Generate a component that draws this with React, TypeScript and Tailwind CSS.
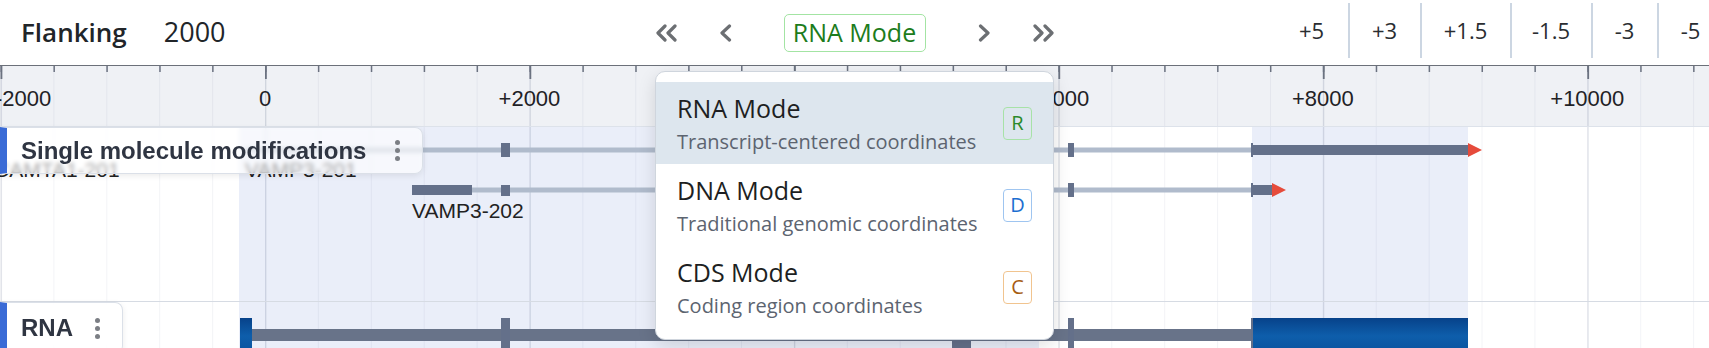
import React from 'react';

// genome coordinate -> page x
const PX0 = 265;
const PER = 0.13223;
const xAt = (bp: number) => PX0 + bp * PER;

const majors = [-2000, 0, 2000, 4000, 6000, 8000, 10000];
const minors = Array.from({ length: 33 }, (_, i) => -2000 + i * 400);

const EXON = '#64708a';
const INTRON = '#b0bbcc';
const ARROW = '#e64b3b';

function Chevron({ dir, double }: { dir: 'left' | 'right'; double?: boolean }) {
  const lines = double
    ? dir === 'left'
      ? ['10,2 3,9 10,16', '20,2 13,9 20,16']
      : ['3,2 10,9 3,16', '13,2 20,9 13,16']
    : dir === 'left'
      ? ['10.5,2 3,9 10.5,16']
      : ['2.5,2 10,9 2.5,16'];
  const w = double ? 23 : 13;
  return (
    <svg width={w} height="18" viewBox={`0 0 ${w} 18`} fill="none" stroke="#6c6f73" strokeWidth="3.2" strokeLinecap="round" strokeLinejoin="round">
      {lines.map((p) => (
        <polyline key={p} points={p} />
      ))}
    </svg>
  );
}

function Kebab() {
  return (
    <div className="flex flex-col gap-[3px]">
      <span className="h-[5px] w-[5px] rounded-full bg-[#7b7e84]" />
      <span className="h-[5px] w-[5px] rounded-full bg-[#7b7e84]" />
      <span className="h-[5px] w-[5px] rounded-full bg-[#7b7e84]" />
    </div>
  );
}

function Grid({ height }: { height: number }) {
  return (
    <>
      {minors.map((bp) => (
        <rect key={bp} x={xAt(bp)} y={0} width={1} height={height} fill="rgba(90,105,135,0.07)" />
      ))}
      {majors.map((bp) => (
        <rect key={bp} x={xAt(bp)} y={0} width={1.5} height={height} fill="rgba(90,105,135,0.14)" />
      ))}
    </>
  );
}

const zoomSteps = [
  { label: '+5', w: 'w-[72px]' },
  { label: '+3', w: 'w-[72px]' },
  { label: '+1.5', w: 'w-[90px]' },
  { label: '-1.5', w: 'w-[81px]' },
  { label: '-3', w: 'w-[66px]' },
  { label: '-5', w: 'w-[66px]' },
];

const modes = [
  {
    title: 'RNA Mode',
    sub: 'Transcript-centered coordinates',
    key: 'R',
    badge: 'border-[#a7e2a7] text-[#2b8a2b]',
    active: true,
  },
  {
    title: 'DNA Mode',
    sub: 'Traditional genomic coordinates',
    key: 'D',
    badge: 'border-[#9fc5f0] text-[#1c6ed0]',
    active: false,
  },
  {
    title: 'CDS Mode',
    sub: 'Coding region coordinates',
    key: 'C',
    badge: 'border-[#f1c48f] text-[#a65d12]',
    active: false,
  },
];

export default function App() {
  return (
    <div className="relative h-[348px] w-[1709px] overflow-hidden bg-white font-['Open_Sans',sans-serif]">
      {/* Top bar */}
      <header className="grid h-[65px] grid-cols-[minmax(0,1fr)_auto_minmax(0,1fr)] items-center text-[#212529]">
        <div className="flex items-center pl-[21px]">
          <span className="text-[26px] font-semibold">Flanking</span>
          <span className="ml-[37px] text-[27px]">2000</span>
        </div>

        <div className="flex items-center">
          <Chevron dir="left" double />
          <span className="ml-[41px] flex">
            <Chevron dir="left" />
          </span>
          <button className="ml-[52px] flex h-[38px] w-[142px] items-center justify-center rounded-[5px] border border-[#a3e4a3] text-[25px] text-[#1c7c1c]">
            RNA Mode
          </button>
          <span className="ml-[52px] flex">
            <Chevron dir="right" />
          </span>
          <span className="ml-[41px] flex">
            <Chevron dir="right" double />
          </span>
        </div>

        <div className="ml-[221px] flex items-start self-stretch pt-[3px]">
          {zoomSteps.map((s, i) => (
            <button
              key={s.label}
              className={`flex h-[55px] shrink-0 items-center justify-center text-[22px] text-[#2a2d31] ${s.w} ${
                i > 0 ? 'border-l-2 border-[#ccd6e2]' : ''
              }`}
            >
              {s.label}
            </button>
          ))}
        </div>
      </header>

      {/* Ruler */}
      <div className="h-[62px] border-t border-b border-t-[#6b7079] border-b-[#dde2ea] bg-[#eff1f5]">
        <svg width="1709" height="60" className="block font-['Liberation_Sans',Arial,sans-serif]">
          <Grid height={60} />
          {minors.map((bp) => (
            <rect key={bp} x={xAt(bp)} y={0} width={1.5} height={6} fill="#6b7280" />
          ))}
          {majors.map((bp) => (
            <rect key={bp} x={xAt(bp)} y={0} width={1.8} height={13} fill="#6b7280" />
          ))}
          {majors.map((bp) => (
            <text
              key={bp}
              x={bp === -2000 ? -5 : xAt(bp)}
              y={40}
              fontSize="22"
              fill="#1f2226"
              textAnchor={bp === -2000 ? 'start' : 'middle'}
            >
              {bp > 0 ? `+${bp}` : `${bp}`}
            </text>
          ))}
        </svg>
      </div>

      {/* Transcript track */}
      <div className="relative h-[175px] border-b border-[#d6dbe3]">
        <svg width="1709" height="174" className="block font-['Liberation_Sans',Arial,sans-serif]">
          <rect x={239} y={0} width={800} height={174} fill="#eaeef9" />
          <rect x={1252} y={0} width={216} height={174} fill="#eaeef9" />
          <Grid height={174} />

          {/* VAMP3-201 */}
          <rect x={245} y={20.5} width={1006} height={5} fill={INTRON} />
          <rect x={501} y={16} width={9} height={14} fill={EXON} />
          <rect x={1068} y={16} width={6} height={14} fill={EXON} />
          <rect x={1251} y={18} width={217} height={10} fill={EXON} />
          <rect x={1251} y={16} width={2} height={14} fill={EXON} />
          <polygon points="1468,16 1482,23 1468,30" fill={ARROW} />
          <text x={-6} y={50} fontSize="21" fill="#222">CAMTA1-201</text>
          <text x={245} y={50} fontSize="21" fill="#222">VAMP3-201</text>

          {/* VAMP3-202 */}
          <rect x={472} y={60.5} width={779} height={5} fill={INTRON} />
          <rect x={412} y={58} width={60} height={10} fill={EXON} />
          <rect x={501} y={58} width={9} height={11} fill={EXON} />
          <rect x={1068} y={56} width={6} height={14} fill={EXON} />
          <rect x={1251} y={58} width={21} height={10} fill={EXON} />
          <rect x={1251} y={56} width={2} height={14} fill={EXON} />
          <polygon points="1272,56 1286,63 1272,70" fill={ARROW} />
          <text x={412} y={91} fontSize="21" fill="#222">VAMP3-202</text>
        </svg>

        <div className="absolute left-0 top-0 flex h-[47px] w-[423px] items-center justify-between rounded-r-[8px] border border-l-[7px] border-[#dbe0e8] border-l-[#3a6bd6] bg-white/60 pl-[14px] pr-[22px] shadow-[0_2px_6px_rgba(0,0,0,0.08)] backdrop-blur-[2px]">
          <span className="font-['Liberation_Sans',Arial,sans-serif] text-[24px] font-bold text-[#2f3542]">
            Single molecule modifications
          </span>
          <Kebab />
        </div>
      </div>

      {/* RNA track */}
      <div className="relative h-[46px]">
        <svg width="1709" height="46" className="block">
          <defs>
            <linearGradient id="rnaBlue" x1="0" y1="0" x2="0" y2="1">
              <stop offset="0" stopColor="#07428a" />
              <stop offset="0.6" stopColor="#0e5eab" />
              <stop offset="1" stopColor="#0b56a2" />
            </linearGradient>
          </defs>
          <rect x={239} y={0} width={800} height={46} fill="#eaeef9" />
          <rect x={1252} y={0} width={216} height={46} fill="#eaeef9" />
          <Grid height={46} />
          <rect x={252} y={27} width={999} height={12} fill="#687389" />
          <rect x={240} y={16} width={12} height={30} fill="url(#rnaBlue)" />
          <rect x={501} y={16} width={9} height={30} fill={EXON} />
          <rect x={952} y={16} width={19} height={30} fill={EXON} />
          <rect x={1068} y={16} width={6} height={30} fill={EXON} />
          <rect x={1251} y={16} width={217} height={30} fill="url(#rnaBlue)" />
          <rect x={1251} y={16} width={2} height={30} fill={EXON} />
        </svg>

        <div className="absolute left-0 top-0 flex h-[52px] w-[123px] items-center justify-between rounded-r-[8px] border border-l-[7px] border-[#dbe0e8] border-l-[#3a6bd6] bg-white/70 pl-[14px] pr-[22px] shadow-[0_2px_6px_rgba(0,0,0,0.08)] backdrop-blur-[2px]">
          <span className="font-['Liberation_Sans',Arial,sans-serif] text-[24px] font-bold text-[#2f3542]">RNA</span>
          <Kebab />
        </div>
      </div>

      {/* Mode dropdown */}
      <div className="absolute left-[655px] top-[71px] w-[399px] overflow-hidden rounded-[10px] border border-[#cfd5dd] bg-white pb-[11px] pt-[10px] shadow-[0_6px_18px_rgba(0,0,0,0.13)]">
        {modes.map((m) => (
          <div
            key={m.key}
            className={`flex h-[82px] items-center justify-between px-[21px] ${m.active ? 'bg-[#dde6ee]' : ''}`}
          >
            <div className="flex flex-col">
              <span className="text-[25px] leading-[32px] text-[#1d1f22]">{m.title}</span>
              <span className="mt-[5px] text-[20px] leading-[26px] text-[#5c6470]">{m.sub}</span>
            </div>
            <span
              className={`flex h-[33px] w-[29px] items-center justify-center rounded-[4px] border text-[20px] ${m.badge}`}
            >
              {m.key}
            </span>
          </div>
        ))}
      </div>
    </div>
  );
}
